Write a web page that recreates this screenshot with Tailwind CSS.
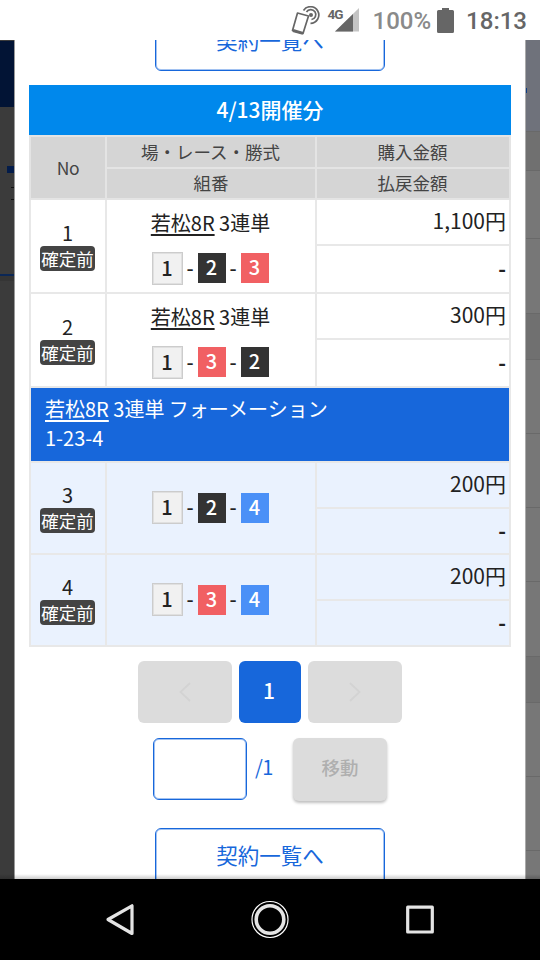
<!DOCTYPE html>
<html lang="ja">

<head>
    <meta charset="UTF-8">
    <meta name="viewport" content="width=device-width, initial-scale=1.0">
    <title>契約一覧</title>
    <script src="https://cdn.jsdelivr.net/npm/@tailwindcss/browser@4"></script>
</head>

<body class="w-[540px] h-[960px] overflow-hidden flex flex-col bg-white text-[#222] font-['Noto_Sans_CJK_JP',sans-serif]">
    <!-- Status bar -->
    <header class="h-10 shrink-0 flex items-center justify-end bg-white pr-[13px] font-['Roboto',sans-serif] font-medium text-[24px] leading-none">
        <svg class="w-[30px] h-[30px] mr-2 mt-[2px]" viewBox="0 0 30 30" fill="none" stroke="#666">
            <path d="M7.500 7L18.500 10L13 27.500L2.500 24.500Z" stroke-width="1.7" stroke-linejoin="round" />
            <path d="M3 24.500L13 27.400" stroke-width="3" />
            <path d="M13.500 4.500A8.300 8.300 0 1 1 20.500 17.300" stroke-width="1.7" />
            <path d="M16.500 6A5 5 0 1 1 21.500 13.500" stroke-width="1.7" />
            <circle cx="21" cy="9" r="2" fill="#666" stroke="none" />
        </svg>
        <span class="text-[13.500px] font-bold text-[#666] self-start mt-2 w-[14px] -mr-[7px] tracking-[-1px]">4G</span>
        <svg class="w-6 h-6 mr-[14px]" viewBox="0 0 24 24">
            <path d="M24 0V23.500H0Z" fill="#c4c4c4" />
            <path d="M18 6V23.500H0Z" fill="#666" />
        </svg>
        <span class="text-[#8a8a8a] mr-[6px] mt-[2px]">100%</span>
        <svg class="w-[17px] h-[25px] mr-3" viewBox="0 0 17 25" fill="#666">
            <path d="M5 0H12V2H15.500Q17 2 17 3.500V23.500Q17 25 15.500 25H1.500Q0 25 0 23.500V3.500Q0 2 1.500 2H5Z" />
        </svg>
        <span class="text-[#666] mt-[2px]">18:13</span>
    </header>

    <div class="h-[839px] shrink-0 flex overflow-hidden relative">
        <!-- Page behind the modal, left edge -->
        <div class="w-[14px] shrink-0 flex flex-col items-end bg-[#3b3b3b]">
            <div class="w-full h-[66px] mt-px bg-[#021435]"></div>
            <div class="w-[7px] h-[7px] mt-[59px] bg-[#031c4a]"></div>
            <div class="w-[3px] h-px mt-[14px] bg-[#111]"></div>
            <div class="w-[3px] h-px mt-[11px] bg-[#111]"></div>
            <div class="w-full h-[2px] mt-[74px] bg-[#0b2756]"></div>
            <div class="w-full h-[5px] bg-[#353535]"></div>
        </div>

        <main class="w-[512px] shrink-0 border-l border-r border-l-[#999] border-r-[#aaa] bg-white flex flex-col items-center -mt-[27px]">
            <a class="w-[230px] h-[58px] shrink-0 pb-[3px] flex items-center justify-center rounded-md border border-[#1767db] ring-1 ring-inset ring-[#1767db]/40 text-[#1767db] text-[21.5px]">契約一覧へ</a>

            <h2 class="w-[482px] h-[50px] shrink-0 mt-[14px] pb-px flex items-center justify-center bg-[#0088ec] text-white text-[21px] font-medium">4/13開催分</h2>
            <table class="w-[482px] table-fixed border-collapse text-center leading-none [&_td]:border-2 [&_td]:border-[#e8e8e8] [&_th]:border-2 [&_th]:border-[#e4e4e4] [&_td]:p-0 [&_th]:p-0">
                <colgroup>
                    <col class="w-[76px]">
                    <col class="w-[210px]">
                    <col class="w-[194px]">
                </colgroup>
                <thead class="bg-[#d5d5d5] text-[17.5px] text-[#444] [&_th]:font-normal">
                    <tr class="h-8">
                        <th rowspan="2"><span class="tracking-[-0.5px]">No</span></th>
                        <th><div class="-mt-px pr-px">場・レース・勝式</div></th>
                        <th><div class="-mt-px pr-px">購入金額</div></th>
                    </tr>
                    <tr class="h-[31px]">
                        <th><div class="-mt-[2px]">組番</div></th>
                        <th><div class="-mt-[2px] pr-px">払戻金額</div></th>
                    </tr>
                </thead>
                <tbody>
                    <tr class="h-[46px]">
                        <td rowspan="2">
                            <div class="h-[25px] pr-px text-[20px] leading-[23px]">1</div>
                            <span class="block w-[55px] h-[25px] ml-[9px] rounded bg-[#444] text-white text-[17.5px] leading-[25px]">確定前</span>
                        </td>
                        <td rowspan="2">
                            <div class="h-[30px] mb-[14px] pr-px text-[20px] leading-[30px]"><u class="underline-offset-[3px] decoration-2">若松8R</u> 3連単</div>
                            <div class="flex items-center justify-center pr-[2px] text-[20px] font-medium">
                                <span class="w-[31px] h-[33px] border border-[#ccc] ring-1 ring-inset ring-[#e0e0e0] bg-[#f1f1f1] leading-[29px]">1</span>
                                <span class="w-[15px] -mt-px">-</span>
                                <span class="w-7 h-[30px] bg-[#333] text-white leading-[28px]">2</span>
                                <span class="w-[15px] -mt-px">-</span>
                                <span class="w-7 h-[30px] bg-[#f16063] text-white leading-[28px]">3</span>
                            </div>
                        </td>
                        <td><div class="text-right pr-[3px] -mt-[3px] text-[21px]">1,100円</div></td>
                    </tr>
                    <tr class="h-12">
                        <td><div class="text-right pr-[3px] -mt-[2px] text-[21px] font-bold">-</div></td>
                    </tr>
                    <tr class="h-[46px]">
                        <td rowspan="2">
                            <div class="h-[25px] pr-px text-[20px] leading-[23px]">2</div>
                            <span class="block w-[55px] h-[25px] ml-[9px] rounded bg-[#444] text-white text-[17.5px] leading-[25px]">確定前</span>
                        </td>
                        <td rowspan="2">
                            <div class="h-[30px] mb-[14px] pr-px text-[20px] leading-[30px]"><u class="underline-offset-[3px] decoration-2">若松8R</u> 3連単</div>
                            <div class="flex items-center justify-center pr-[2px] text-[20px] font-medium">
                                <span class="w-[31px] h-[33px] border border-[#ccc] ring-1 ring-inset ring-[#e0e0e0] bg-[#f1f1f1] leading-[29px]">1</span>
                                <span class="w-[15px] -mt-px">-</span>
                                <span class="w-7 h-[30px] bg-[#f16063] text-white leading-[28px]">3</span>
                                <span class="w-[15px] -mt-px">-</span>
                                <span class="w-7 h-[30px] bg-[#333] text-white leading-[28px]">2</span>
                            </div>
                        </td>
                        <td><div class="text-right pr-[3px] -mt-[3px] text-[21px]">300円</div></td>
                    </tr>
                    <tr class="h-12">
                        <td><div class="text-right pr-[3px] -mt-[2px] text-[21px] font-bold">-</div></td>
                    </tr>
                    <tr class="h-[75px] bg-[#1767db] text-white text-left">
                        <td colspan="3">
                            <div class="pl-[14px] -mt-[3px] text-[20px] leading-[29px]">
                                <u class="underline-offset-[3px] decoration-2">若松8R</u> 3連単 フォーメーション<br>1-23-4
                            </div>
                        </td>
                    </tr>
                </tbody>
                <tbody class="bg-[#eaf2fe]">
                    <tr class="h-[46px]">
                        <td rowspan="2">
                            <div class="h-[25px] pr-px text-[20px] leading-[23px]">3</div>
                            <span class="block w-[55px] h-[25px] ml-[9px] rounded bg-[#444] text-white text-[17.5px] leading-[25px]">確定前</span>
                        </td>
                        <td rowspan="2">
                            <div class="flex items-center justify-center pr-[2px] -mt-px text-[20px] font-medium">
                                <span class="w-[31px] h-[33px] border border-[#ccc] ring-1 ring-inset ring-[#e0e0e0] bg-[#f1f1f1] leading-[29px]">1</span>
                                <span class="w-[15px] -mt-px">-</span>
                                <span class="w-7 h-[30px] bg-[#333] text-white leading-[28px]">2</span>
                                <span class="w-[15px] -mt-px">-</span>
                                <span class="w-7 h-[30px] bg-[#4a90f7] text-white leading-[28px]">4</span>
                            </div>
                        </td>
                        <td><div class="text-right pr-[3px] -mt-[3px] text-[21px]">200円</div></td>
                    </tr>
                    <tr class="h-[46px]">
                        <td><div class="text-right pr-[3px] -mt-[2px] text-[21px] font-bold">-</div></td>
                    </tr>
                    <tr class="h-[46px]">
                        <td rowspan="2">
                            <div class="h-[25px] pr-px text-[20px] leading-[23px]">4</div>
                            <span class="block w-[55px] h-[25px] ml-[9px] rounded bg-[#444] text-white text-[17.5px] leading-[25px]">確定前</span>
                        </td>
                        <td rowspan="2">
                            <div class="flex items-center justify-center pr-[2px] -mt-px text-[20px] font-medium">
                                <span class="w-[31px] h-[33px] border border-[#ccc] ring-1 ring-inset ring-[#e0e0e0] bg-[#f1f1f1] leading-[29px]">1</span>
                                <span class="w-[15px] -mt-px">-</span>
                                <span class="w-7 h-[30px] bg-[#f16063] text-white leading-[28px]">3</span>
                                <span class="w-[15px] -mt-px">-</span>
                                <span class="w-7 h-[30px] bg-[#4a90f7] text-white leading-[28px]">4</span>
                            </div>
                        </td>
                        <td><div class="text-right pr-[3px] -mt-[3px] text-[21px]">200円</div></td>
                    </tr>
                    <tr class="h-[46px]">
                        <td><div class="text-right pr-[3px] -mt-[2px] text-[21px] font-bold">-</div></td>
                    </tr>
                </tbody>
            </table>

            <!-- Pagination -->
            <nav class="flex shrink-0 gap-[7px] mt-[14px] h-[62px]">
                <button class="w-[94px] rounded-md bg-[#dcdcdc] flex items-center justify-center">
                    <svg class="w-3 h-5" viewBox="0 0 12 20" fill="none" stroke="#d3d3d3" stroke-width="1.800"><path d="M11 1L1.500 10L11 19" /></svg>
                </button>
                <button class="w-[62px] rounded-md bg-[#1767db] text-white text-[21px] font-medium pr-[2px] pb-[3px]">1</button>
                <button class="w-[94px] rounded-md bg-[#dcdcdc] flex items-center justify-center">
                    <svg class="w-3 h-5" viewBox="0 0 12 20" fill="none" stroke="#d3d3d3" stroke-width="1.800"><path d="M1 1L10.500 10L1 19" /></svg>
                </button>
            </nav>
            <form class="flex shrink-0 items-center mt-[15px] h-[62px]">
                <input type="text" class="w-[94px] h-[62px] rounded-md border border-[#1767db] ring-1 ring-inset ring-[#1767db]/40">
                <span class="w-[38px] ml-2 text-[20px] tracking-[-0.5px] text-[#1767db] -mt-1">/1</span>
                <button type="button" class="w-[94px] h-[63px] pb-[3px] rounded-md bg-[#dcdcdc] text-[#afafaf] text-[18.5px] font-medium shadow-[0_2px_3px_rgba(0,0,0,0.25)]">移動</button>
            </form>

            <a class="w-[230px] h-[58px] shrink-0 mt-7 pb-[3px] flex items-center justify-center rounded-md border border-[#1767db] ring-1 ring-inset ring-[#1767db]/40 text-[#1767db] text-[21.5px]">契約一覧へ</a>
        </main>

        <!-- Page behind the modal, right edge -->
        <div class="w-[14px] shrink-0 flex flex-col bg-[#777] [&>div]:border-b [&>div]:border-[#696969]">
            <div class="h-[92px] bg-[#6f727b] pt-12"><span class="block w-px h-[5px] bg-[#0d3d85]"></span></div>
            <div class="h-[39px] bg-[#707070]"></div>
            <div class="h-[68px]"></div>
            <div class="h-[75px]"></div>
            <div class="h-[46px] bg-[#707070]"></div>
            <div class="h-[74px]"></div>
            <div class="h-[74px]"></div>
            <div class="h-[74px]"></div>
            <div class="h-[75px]"></div>
            <div class="h-[46px] bg-[#707070]"></div>
            <div class="h-[74px]"></div>
            <div class="h-[74px]"></div>
        </div>

        <div class="absolute left-0 bottom-0 w-full h-[5px] bg-linear-to-b from-black/0 to-black/20"></div>
    </div>

    <!-- Android navigation -->
    <footer class="flex-1 flex items-start justify-center gap-[112px] pt-[21px] bg-black">
        <svg class="w-[38px] h-[40px]" viewBox="0 0 38 40" fill="none" stroke="#e4e4e4" stroke-width="3.200" stroke-linejoin="round"><path d="M31 5.800V33.500L7 19.500Z" /></svg>
        <svg class="w-[38px] h-[40px]" viewBox="0 0 38 40" fill="none">
            <circle cx="19" cy="19.500" r="18" stroke="#fff" stroke-width="1.200" />
            <circle cx="19" cy="19.500" r="13.800" stroke="#e4e4e4" stroke-width="3.600" />
        </svg>
        <svg class="w-[38px] h-[40px]" viewBox="0 0 38 40" fill="none" stroke="#e4e4e4" stroke-width="3.200" stroke-linejoin="round"><rect x="6.700" y="7.200" width="24.600" height="24.800" /></svg>
    </footer>
</body>

</html>
